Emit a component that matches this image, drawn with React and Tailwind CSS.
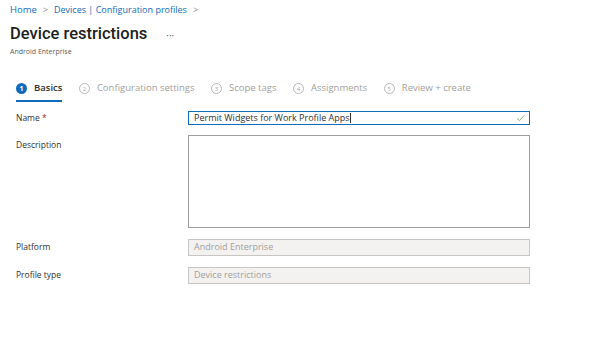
import React from "react";

const font = { fontFamily: '"Open Sans", "Noto Sans", sans-serif' };

function Step({ n, label, active }) {
  return (
    <div className="relative flex items-center gap-[7px] h-[24px]">
      <span
        className={
          active
            ? "flex items-center justify-center w-[11px] h-[11px] rounded-full bg-[#0f6cbd] text-white text-[7px] font-bold leading-none"
            : "flex items-center justify-center w-[11px] h-[11px] rounded-full border border-[#b8b8b8] text-[#a8a8a8] text-[6px] leading-none"
        }
      >
        {n}
      </span>
      <span className={active ? "text-[9.5px] text-[#323130] font-semibold" : "text-[9.5px] text-[#a19f9d]"}>
        {label}
      </span>
      {active && <div className="absolute left-0 right-0 bottom-[-1px] h-[2px] bg-[#0f6cbd]" />}
    </div>
  );
}

function Row({ label, children, className = "", center = false }) {
  return (
    <div className={"flex " + (center ? "items-center " : "items-start ") + className}>
      <div className={"w-[188px] pl-[16px] text-[8.5px] text-[#323130] " + (center ? "leading-[14px]" : "leading-[17px] pt-[1px]")}>
        {label}
      </div>
      <div className="w-[342px]">{children}</div>
    </div>
  );
}

export default function App() {
  return (
    <div className="w-[601px] h-[342px] bg-white overflow-hidden" style={font}>
      <div className="pl-[10px] pt-[3px]">
        <div className="flex items-center gap-[6px] text-[9px] text-[#0f6cbd] h-[14px]">
          <span className="text-[9.5px]">Home</span>
          <span className="text-[#8a8886]">&gt;</span>
          <span>Devices | Configuration profiles</span>
          <span className="text-[#8a8886]">&gt;</span>
        </div>
        <div className="flex items-center mt-[7px] h-[21px]">
          <span className="text-[#201f1e] leading-none font-[Roboto] font-medium text-[16.5px]">
            Device restrictions
          </span>
          <span className="ml-[19px] text-[10px] text-[#605e5c] leading-none">···</span>
        </div>
        <div className="text-[7px] text-[#605e5c] mt-[2px]">Android Enterprise</div>
      </div>

      <div className="flex items-center pl-[16px] mt-[19px] gap-[16.5px]">
        <Step n="1" label="Basics" active />
        <Step n="2" label="Configuration settings" />
        <Step n="3" label="Scope tags" />
        <Step n="4" label="Assignments" />
        <Step n="5" label="Review + create" />
      </div>

      <div className="mt-[10px] flex flex-col">
        <Row center label={<span>Name <span className="text-[#a4262c]">*</span></span>}>
          <div className="flex items-center h-[14px] border border-[#0f6cbd] px-[5px] text-[9px] text-[#323130]">
            <span>Permit Widgets for Work Profile Apps</span>
            <span className="w-[1px] h-[10px] bg-[#323130]" />
            <svg className="ml-auto mr-[-1px]" width="9" height="8" viewBox="0 0 9 8">
              <path d="M1 4.5 L3.5 6.5 L8 1.5" stroke="#8db36a" strokeWidth="1" fill="none" />
            </svg>
          </div>
        </Row>
        <Row label="Description" className="mt-[10px]">
          <div className="h-[93px] border border-[#a19f9d]" />
        </Row>
        <Row center label="Platform" className="mt-[11px]">
          <div className="flex items-center h-[17px] border border-[#c8c6c4] bg-[#f3f2f1] px-[5px] text-[9px] text-[#a19f9d]">
            Android Enterprise
          </div>
        </Row>
        <Row center label="Profile type" className="mt-[11px]">
          <div className="flex items-center h-[17px] border border-[#c8c6c4] bg-[#f3f2f1] px-[5px] text-[9px] text-[#a19f9d]">
            Device restrictions
          </div>
        </Row>
      </div>
    </div>
  );
}
